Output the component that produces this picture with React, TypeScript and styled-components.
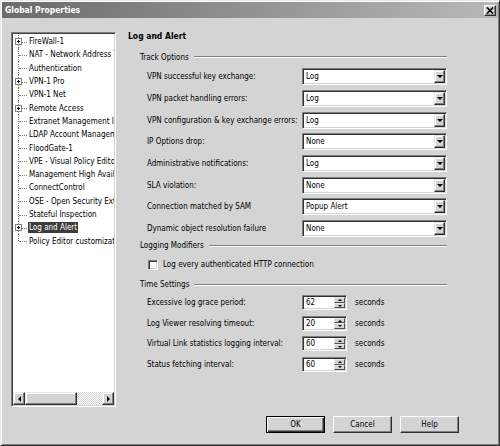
import styled, { createGlobalStyle } from "styled-components";

const GlobalStyle = createGlobalStyle`
  html, body {
    margin: 0;
    padding: 0;
    background: #d4d4d4;
  }
  body {
    font-family: "DejaVu Sans Condensed", "Liberation Sans", sans-serif;
    font-size: 8px;
    color: #000;
  }
`;

const Window = styled.div`
  width: 500px;
  height: 446px;
  box-sizing: border-box;
  background: #d4d4d4;
  border-top: 1px solid #e8e8e8;
  border-left: 1px solid #e8e8e8;
  border-right: 1px solid #303030;
  border-bottom: 1px solid #303030;
  box-shadow: inset 1px 1px #fff, inset -1px -1px #808080;
  padding: 1px;
  display: flex;
  flex-direction: column;
`;

const TitleBar = styled.div`
  height: 16px;
  display: flex;
  align-items: center;
  justify-content: space-between;
  padding: 0 2px 0 3px;
  background: linear-gradient(90deg, #6a6a6a 0%, #8e8e8e 45%, #b8b8b8 100%);
`;

const Title = styled.span`
  color: #fff;
  font-weight: bold;
  font-size: 8.5px;
`;

const CloseButton = styled.div`
  width: 12px;
  height: 11px;
  box-sizing: border-box;
  background: #d4d4d4;
  border: 1px solid;
  border-color: #fff #303030 #303030 #fff;
  box-shadow: inset -1px -1px #808080;
  display: flex;
  align-items: center;
  justify-content: center;
`;

const Body = styled.div`
  flex: 1;
  display: flex;
  flex-direction: column;
  padding: 14px 0 0 9px;
`;

const Main = styled.div`
  display: flex;
  gap: 12px;
  height: 375px;
`;

const TreePane = styled.div`
  width: 105px;
  box-sizing: border-box;
  background: #fff;
  border: 1px solid;
  border-color: #808080 #fff #fff #808080;
  box-shadow: inset 1px 1px #404040, inset -1px -1px #d4d4d4;
  padding: 1px;
  display: flex;
  flex-direction: column;
`;

const TreeList = styled.div`
  flex: 1;
  overflow: hidden;
  padding-top: 1px;
`;

const TreeRow = styled.div<{ $last?: boolean }>`
  position: relative;
  height: 13.3px;
  display: flex;
  align-items: center;
  padding-left: 16px;
  white-space: nowrap;

  &::before {
    content: "";
    position: absolute;
    left: 5px;
    top: 0;
    height: ${(p) => (p.$last ? "50%" : "100%")};
    border-left: 1px dotted #808080;
  }
  &::after {
    content: "";
    position: absolute;
    left: 6px;
    top: 50%;
    width: 8px;
    border-top: 1px dotted #808080;
  }
`;

const Expander = styled.span`
  position: absolute;
  left: 2px;
  top: 50%;
  margin-top: -3.5px;
  width: 7px;
  height: 7px;
  box-sizing: border-box;
  border: 1px solid #808080;
  background: #fff;
  z-index: 1;

  &::before {
    content: "";
    position: absolute;
    left: 1px;
    top: 2px;
    width: 3px;
    border-top: 1px solid #000;
  }
  &::after {
    content: "";
    position: absolute;
    left: 2px;
    top: 1px;
    height: 3px;
    border-left: 1px solid #000;
  }
`;

const TreeLabel = styled.span<{ $selected?: boolean }>`
  padding: 1px 1px;
  margin-left: -1px;
  background: ${(p) => (p.$selected ? "#3c3c3c" : "transparent")};
  color: ${(p) => (p.$selected ? "#fff" : "#000")};
`;

const HScroll = styled.div`
  height: 13px;
  display: flex;
  background-color: #ececec;
  background-image: repeating-conic-gradient(#d4d4d4 0 25%, #fff 0 50%);
  background-size: 2px 2px;
`;

const ScrollButton = styled.div`
  width: 12px;
  height: 13px;
  box-sizing: border-box;
  background: #d4d4d4;
  border: 1px solid;
  border-color: #e8e8e8 #303030 #303030 #e8e8e8;
  box-shadow: inset -1px -1px #808080, inset 1px 1px #fff;
  display: flex;
  align-items: center;
  justify-content: center;
`;

const Thumb = styled.div`
  width: 52px;
  height: 13px;
  box-sizing: border-box;
  background: #d4d4d4;
  border: 1px solid;
  border-color: #e8e8e8 #303030 #303030 #e8e8e8;
  box-shadow: inset -1px -1px #808080, inset 1px 1px #fff;
`;

const Spacer = styled.div`
  flex: 1;
`;

const Arrow = styled.span<{ $dir: "left" | "right" | "down" | "up"; $size?: number }>`
  width: 0;
  height: 0;
  border-style: solid;
  border-color: transparent;
  ${(p) => {
    const s = p.$size ?? 3;
    switch (p.$dir) {
      case "left":
        return `border-width: ${s}px ${s}px ${s}px 0; border-right-color: #000;`;
      case "right":
        return `border-width: ${s}px 0 ${s}px ${s}px; border-left-color: #000;`;
      case "up":
        return `border-width: 0 ${s}px ${s}px ${s}px; border-bottom-color: #000;`;
      default:
        return `border-width: ${s}px ${s}px 0 ${s}px; border-top-color: #000;`;
    }
  }}
`;

const Content = styled.div`
  width: 320px;
  display: flex;
  flex-direction: column;
  margin-top: -2px;
`;

const Heading = styled.div`
  font-weight: bold;
  font-size: 8.5px;
  height: 12px;
  line-height: 12px;
  margin-bottom: 9px;
`;

const SectionHeader = styled.div<{ $gap?: number }>`
  display: flex;
  align-items: center;
  gap: 5px;
  height: 12px;
  margin-left: 12px;
  margin-right: 1px;
  margin-bottom: ${(p) => p.$gap ?? 3}px;

  &::after {
    content: "";
    flex: 1;
    height: 0;
    border-top: 1px solid #808080;
    border-bottom: 1px solid #fff;
  }
`;

const FieldRow = styled.div<{ $h: number }>`
  display: grid;
  grid-template-columns: 155px auto auto;
  align-items: center;
  column-gap: 8px;
  justify-content: start;
  height: ${(p) => p.$h}px;
  padding-left: 19px;
`;

const FieldLabel = styled.span`
  white-space: nowrap;
`;

const Sunken = styled.div`
  box-sizing: border-box;
  background: #fff;
  border: 1px solid;
  border-color: #808080 #fff #fff #808080;
  box-shadow: inset 1px 1px #303030, inset -1px -1px #d4d4d4;
  display: flex;
  align-items: center;
  padding: 2px 2px 2px 3px;
`;

const Select = styled(Sunken)`
  width: 145px;
  height: 17px;
  margin-left: -8px;
`;

const Value = styled.span`
  flex: 1;
  white-space: nowrap;
`;

const DropButton = styled.div`
  width: 11px;
  height: 13px;
  box-sizing: border-box;
  background: #d4d4d4;
  border: 1px solid;
  border-color: #e8e8e8 #303030 #303030 #e8e8e8;
  box-shadow: inset -1px -1px #808080, inset 1px 1px #fff;
  display: flex;
  align-items: center;
  justify-content: center;
  margin-right: -1px;
`;

const Spin = styled(Sunken)`
  width: 45px;
  height: 15px;
  margin-left: -8px;
  padding-right: 1px;
`;

const SpinButtons = styled.div`
  width: 11px;
  height: 11px;
  display: flex;
  flex-direction: column;
`;

const SpinHalf = styled.div`
  flex: 1;
  box-sizing: border-box;
  background: #d4d4d4;
  border: 1px solid;
  border-color: #e8e8e8 #505050 #505050 #e8e8e8;
  display: flex;
  align-items: center;
  justify-content: center;
`;

const Units = styled.span`
  padding-left: 0;
`;

const CheckRow = styled.label`
  display: flex;
  align-items: center;
  gap: 5px;
  height: 18px;
  padding-left: 20px;
  margin-bottom: 5px;
`;

const CheckBox = styled.span`
  width: 10px;
  height: 10px;
  box-sizing: border-box;
  background: #fff;
  border: 1px solid;
  border-color: #808080 #fff #fff #808080;
  box-shadow: inset 1px 1px #303030, inset -1px -1px #d4d4d4;
`;

const Footer = styled.div`
  display: flex;
  justify-content: flex-end;
  gap: 8px;
  padding: 9px 39px 0 0;
`;

const Button = styled.button<{ $default?: boolean }>`
  width: 59px;
  height: 17px;
  box-sizing: border-box;
  font: inherit;
  color: #000;
  background: #d4d4d4;
  padding: 0;
  border: 1px solid;
  border-color: ${(p) => (p.$default ? "#000" : "#fff #303030 #303030 #fff")};
  box-shadow: ${(p) =>
    p.$default
      ? "inset 1px 1px #fff, inset -1px -1px #303030, inset -2px -2px #808080"
      : "inset -1px -1px #808080"};
`;

type TreeItem = { label: string; expandable?: boolean; selected?: boolean };

const treeItems: TreeItem[] = [
  { label: "FireWall-1", expandable: true },
  { label: "NAT - Network Address Translation" },
  { label: "Authentication" },
  { label: "VPN-1 Pro", expandable: true },
  { label: "VPN-1 Net" },
  { label: "Remote Access", expandable: true },
  { label: "Extranet Management Interface" },
  { label: "LDAP Account Management" },
  { label: "FloodGate-1" },
  { label: "VPE - Visual Policy Editor" },
  { label: "Management High Availability" },
  { label: "ConnectControl" },
  { label: "OSE - Open Security Extension" },
  { label: "Stateful Inspection" },
  { label: "Log and Alert", expandable: true, selected: true },
  { label: "Policy Editor customization" },
];

const trackOptions: [string, string][] = [
  ["VPN successful key exchange:", "Log"],
  ["VPN packet handling errors:", "Log"],
  ["VPN configuration & key exchange errors:", "Log"],
  ["IP Options drop:", "None"],
  ["Administrative notifications:", "Log"],
  ["SLA violation:", "None"],
  ["Connection matched by SAM", "Popup Alert"],
  ["Dynamic object resolution failure", "None"],
];

const timeSettings: [string, string][] = [
  ["Excessive log grace period:", "62"],
  ["Log Viewer resolving timeout:", "20"],
  ["Virtual Link statistics logging interval:", "60"],
  ["Status fetching interval:", "60"],
];

export default function App() {
  return (
    <>
      <GlobalStyle />
      <Window>
        <TitleBar>
          <Title>Global Properties</Title>
          <CloseButton>
            <svg width="8" height="7" viewBox="0 0 8 7">
              <path d="M1 0.5 L7 6.5 M7 0.5 L1 6.5" stroke="#000" strokeWidth="1.6" />
            </svg>
          </CloseButton>
        </TitleBar>
        <Body>
          <Main>
            <TreePane>
              <TreeList>
                {treeItems.map((item, i) => (
                  <TreeRow key={item.label} $last={i === treeItems.length - 1}>
                    {item.expandable && <Expander />}
                    <TreeLabel $selected={item.selected}>{item.label}</TreeLabel>
                  </TreeRow>
                ))}
              </TreeList>
              <HScroll>
                <ScrollButton>
                  <Arrow $dir="left" />
                </ScrollButton>
                <Thumb />
                <Spacer />
                <ScrollButton>
                  <Arrow $dir="right" />
                </ScrollButton>
              </HScroll>
            </TreePane>
            <Content>
              <Heading>Log and Alert</Heading>
              <SectionHeader>Track Options</SectionHeader>
              {trackOptions.map(([label, value]) => (
                <FieldRow key={label} $h={21.7}>
                  <FieldLabel>{label}</FieldLabel>
                  <Select>
                    <Value>{value}</Value>
                    <DropButton>
                      <Arrow $dir="down" $size={3} />
                    </DropButton>
                  </Select>
                </FieldRow>
              ))}
              <SectionHeader $gap={4}>Logging Modifiers</SectionHeader>
              <CheckRow>
                <CheckBox />
                Log every authenticated HTTP connection
              </CheckRow>
              <SectionHeader $gap={2}>Time Settings</SectionHeader>
              {timeSettings.map(([label, value]) => (
                <FieldRow key={label} $h={20.6}>
                  <FieldLabel>{label}</FieldLabel>
                  <Spin>
                    <Value>{value}</Value>
                    <SpinButtons>
                      <SpinHalf>
                        <Arrow $dir="up" $size={2} />
                      </SpinHalf>
                      <SpinHalf>
                        <Arrow $dir="down" $size={2} />
                      </SpinHalf>
                    </SpinButtons>
                  </Spin>
                  <Units>seconds</Units>
                </FieldRow>
              ))}
            </Content>
          </Main>
          <Footer>
            <Button $default>OK</Button>
            <Button>Cancel</Button>
            <Button>Help</Button>
          </Footer>
        </Body>
      </Window>
    </>
  );
}
